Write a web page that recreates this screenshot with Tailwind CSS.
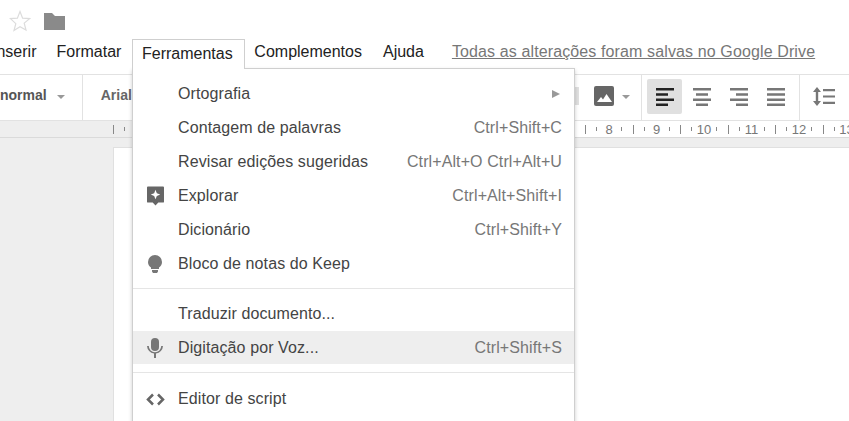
<!DOCTYPE html>
<html lang="en">
<head>
    <meta charset="UTF-8">
    <title>Google Docs</title>
    <script src="https://cdn.jsdelivr.net/npm/@tailwindcss/browser@4"></script>
</head>
<body class="bg-white">
<div class="relative w-[849px] h-[421px] overflow-hidden font-['Liberation_Sans',Arial,sans-serif] text-[16px] text-[#222]">

    <!-- title row -->
    <div class="h-[39px] flex items-center gap-[13px] pl-[9px] pt-[3px]">
        <svg class="w-[22px] h-[22px]" viewBox="0 0 22 22" fill="none" stroke="#dcdcdc" stroke-width="1.2"><path d="M11 1.500l2.600 6.600 7 .5-5.400 4.500 1.800 6.900L11 16.700l-6 3.800 1.800-6.900L1.400 8.600l7-.5z"/></svg>
        <svg class="w-[21px] h-[18px]" viewBox="0 0 21 18" fill="#8a8a8a"><path d="M0 1h8l3 3h10v14H0z"/></svg>
    </div>

    <!-- menu bar -->
    <div class="h-[35px] flex items-center pb-[9px] ml-[-8px]">
        <span>Inserir</span>
        <span class="ml-[20px]">Formatar</span>
        <div class="relative z-20 self-start ml-[11px] h-[30px] w-[113px] pb-[2px] pr-[3px] bg-white border border-b-0 border-[#cfcfcf] flex items-center justify-center">Ferramentas</div>
        <span class="ml-[9px]">Complementos</span>
        <span class="ml-[21px]">Ajuda</span>
        <span class="ml-[28px] text-[#777] underline tracking-[0.12px]">Todas as alterações foram salvas no Google Drive</span>
    </div>

    <!-- toolbar -->
    <div class="h-[47px] border-y border-[#e2e2e2] flex items-center relative">
        <span class="font-bold text-[14px] text-[#555] mt-[-4px]">normal</span>
        <span class="ml-[10px] mt-[-2px] w-0 h-0 border-x-[4px] border-x-transparent border-t-[4px] border-t-[#999]"></span>
        <span class="ml-[17px] w-px h-full bg-[#e2e2e2]"></span>
        <span class="ml-[18px] mt-[-4px] font-bold text-[14px] text-[#666]">Arial</span>

        <div class="absolute left-[561px] top-0 h-full flex items-center">
            <div class="w-[18px] h-[18px] mt-[-4px] bg-[#e0e0e0]"></div>
            <div class="ml-[15px] mt-[-4px] w-[20px] h-[20px] rounded-[2px] bg-[#666] flex items-end justify-center pb-[4px]">
                <svg class="w-[15px] h-[9px]" viewBox="0 0 15 9" fill="#fff"><path d="M0 9l4-5 2 2.500L9.500 1 15 9z"/></svg>
            </div>
            <span class="ml-[8px] mt-[-2px] w-0 h-0 border-x-[4px] border-x-transparent border-t-[4px] border-t-[#999]"></span>
            <span class="ml-[11px] w-px h-full bg-[#e2e2e2]"></span>
            <div class="ml-[5px] mt-[-2px] w-[35px] h-[35px] rounded-[2px] bg-[#e0e0e0] flex items-center justify-center">
                <svg class="w-[18px] h-[18px]" viewBox="0 0 18 18" fill="#222"><path d="M0 0h18v2.500H0zM0 5.200h12v2.500H0zM0 10.400h18v2.500H0zM0 15.500h12V18H0z"/></svg>
            </div>
            <div class="ml-[2px] mt-[-2px] w-[35px] h-[35px] flex items-center justify-center">
                <svg class="w-[18px] h-[18px]" viewBox="0 0 18 18" fill="#777"><path d="M0 0h18v2.500H0zM3 5.200h12v2.500H3zM0 10.400h18v2.500H0zM3 15.500h12V18H3z"/></svg>
            </div>
            <div class="ml-[2px] mt-[-2px] w-[35px] h-[35px] flex items-center justify-center">
                <svg class="w-[18px] h-[18px]" viewBox="0 0 18 18" fill="#777"><path d="M0 0h18v2.500H0zM6 5.200h12v2.500H6zM0 10.400h18v2.500H0zM6 15.500h12V18H6z"/></svg>
            </div>
            <div class="ml-[2px] mt-[-2px] w-[35px] h-[35px] flex items-center justify-center">
                <svg class="w-[18px] h-[18px]" viewBox="0 0 18 18" fill="#777"><path d="M0 0h18v2.500H0zM0 5.200h18v2.500H0zM0 10.400h18v2.500H0zM0 15.500h18V18H0z"/></svg>
            </div>
            <span class="ml-[6px] w-px h-full bg-[#e2e2e2]"></span>
            <svg class="ml-[13px] mt-[-3px] w-[23px] h-[19px]" viewBox="0 0 23 19" fill="#777"><path d="M4 0l4 5H5.200v9H8l-4 5-4-5h2.800V5H0zM10 2h12v2.200H10zM10 8.400h12v2.200H10zM10 14.800h12V17H10z"/></svg>
        </div>
    </div>

    <!-- ruler -->
    <div class="h-[16px] flex text-[13px] leading-none text-[#777] whitespace-nowrap">
        <div class="w-[210px] shrink-0 h-full bg-[#eeeeee] flex items-center pl-[113px]">
            <span class="w-px h-[9px] bg-[#888]"></span>
            <span class="ml-[10px] w-px h-[4px] bg-[#888]"></span>
        </div>
        <div class="ml-[375px] shrink-0 h-full flex items-center">
            <div class="w-[47.5px] shrink-0 flex items-center"><span class="w-px h-[9px] bg-[#888]"></span><span class="ml-[10px] w-px h-[4px] bg-[#888]"></span><span class="w-[24px] text-center">8</span><span class="w-px h-[4px] bg-[#888]"></span></div>
            <div class="w-[47.5px] shrink-0 flex items-center"><span class="w-px h-[9px] bg-[#888]"></span><span class="ml-[10px] w-px h-[4px] bg-[#888]"></span><span class="w-[24px] text-center">9</span><span class="w-px h-[4px] bg-[#888]"></span></div>
            <div class="w-[47.5px] shrink-0 flex items-center"><span class="w-px h-[9px] bg-[#888]"></span><span class="ml-[10px] w-px h-[4px] bg-[#888]"></span><span class="w-[24px] text-center">10</span><span class="w-px h-[4px] bg-[#888]"></span></div>
            <div class="w-[47.5px] shrink-0 flex items-center"><span class="w-px h-[9px] bg-[#888]"></span><span class="ml-[10px] w-px h-[4px] bg-[#888]"></span><span class="w-[24px] text-center">11</span><span class="w-px h-[4px] bg-[#888]"></span></div>
            <div class="w-[47.5px] shrink-0 flex items-center"><span class="w-px h-[9px] bg-[#888]"></span><span class="ml-[10px] w-px h-[4px] bg-[#888]"></span><span class="w-[24px] text-center">12</span><span class="w-px h-[4px] bg-[#888]"></span></div>
            <div class="w-[47.5px] shrink-0 flex items-center"><span class="w-px h-[9px] bg-[#888]"></span><span class="ml-[10px] w-px h-[4px] bg-[#888]"></span><span class="w-[24px] text-center">13</span></div>
        </div>
    </div>

    <!-- document area -->
    <div class="h-[284px] overflow-hidden bg-[#eeeeee] border-t border-[#dadada] pt-[9px] pl-[113px]">
        <div class="w-[800px] h-[320px] bg-white border border-[#e0e0e0]"></div>
    </div>

    <!-- dropdown -->
    <div class="absolute left-[132px] top-[68px] z-10 w-[443px] h-[380px] bg-white border border-[#cfcfcf] shadow-[0_2px_4px_rgba(0,0,0,0.2)] pt-[8px] text-[#444] tracking-[0.1px]">
        <div class="h-[34px] flex items-center pl-[45px] pr-[14px] justify-between">
            <span>Ortografia</span>
            <span class="w-0 h-0 border-y-[4px] border-y-transparent border-l-[8px] border-l-[#999]"></span>
        </div>
        <div class="h-[34px] flex items-center pl-[45px] pr-[12px] justify-between">
            <span>Contagem de palavras</span><span class="text-[#777]">Ctrl+Shift+C</span>
        </div>
        <div class="h-[34px] flex items-center pl-[45px] pr-[12px] justify-between">
            <span>Revisar edições sugeridas</span><span class="text-[#777]">Ctrl+Alt+O Ctrl+Alt+U</span>
        </div>
        <div class="h-[34px] flex items-center pr-[12px]">
            <svg class="ml-[14px] w-[17px] h-[20px]" viewBox="0 0 18 20" fill="#666"><path fill-rule="evenodd" d="M1 0h16a1 1 0 0 1 1 1v15a1 1 0 0 1-1 1h-5l-3 3-3-3H1a1 1 0 0 1-1-1V1a1 1 0 0 1 1-1zM9 3.500l-1.400 3.600L4 8.500l3.600 1.400L9 13.500l1.400-3.600L14 8.500l-3.600-1.400z"/></svg>
            <span class="ml-[14px]">Explorar</span><span class="ml-auto text-[#777]">Ctrl+Alt+Shift+I</span>
        </div>
        <div class="h-[34px] flex items-center pl-[45px] pr-[12px] justify-between">
            <span>Dicionário</span><span class="text-[#777]">Ctrl+Shift+Y</span>
        </div>
        <div class="h-[34px] flex items-center">
            <svg class="ml-[15px] w-[14px] h-[18px]" viewBox="0 0 14 18" fill="#777"><path d="M7 0a7 7 0 0 1 7 7c0 2.400-1.200 4.200-3 5.500V14H3v-1.500C1.200 11.200 0 9.400 0 7a7 7 0 0 1 7-7zM4 15h6v1.500l-1 1.500H5l-1-1.500z"/></svg>
            <span class="ml-[16px]">Bloco de notas do Keep</span>
        </div>
        <div class="h-px bg-[#e5e5e5] mt-[7px] mb-[8px]"></div>
        <div class="h-[34px] flex items-center pl-[45px]">Traduzir documento...</div>
        <div class="h-[33px] flex items-center pr-[12px] bg-[#eeeeee]">
            <svg class="ml-[14px] w-[16px] h-[20px]" viewBox="0 0 16 20" fill="#777"><path d="M8 0a4 4 0 0 1 4 4v5a4 4 0 0 1-8 0V4a4 4 0 0 1 4-4z"/><path d="M0 8h1.800a6.200 6.200 0 0 0 12.400 0H16a8 8 0 0 1-7 7.500V20H7v-4.500A8 8 0 0 1 0 8z"/></svg>
            <span class="ml-[15px]">Digitação por Voz...</span><span class="ml-auto text-[#777]">Ctrl+Shift+S</span>
        </div>
        <div class="h-px bg-[#e5e5e5] mt-[8px] mb-[8px]"></div>
        <div class="h-[36px] flex items-center">
            <svg class="ml-[13px] w-[19px] h-[13px]" viewBox="0 0 19 13" fill="none" stroke="#666" stroke-width="2.500"><path d="M7 1.500L2 6.500l5 5M12 1.500l5 5-5 5"/></svg>
            <span class="ml-[13px]">Editor de script</span>
        </div>
    </div>
</div>
</body>
</html>
